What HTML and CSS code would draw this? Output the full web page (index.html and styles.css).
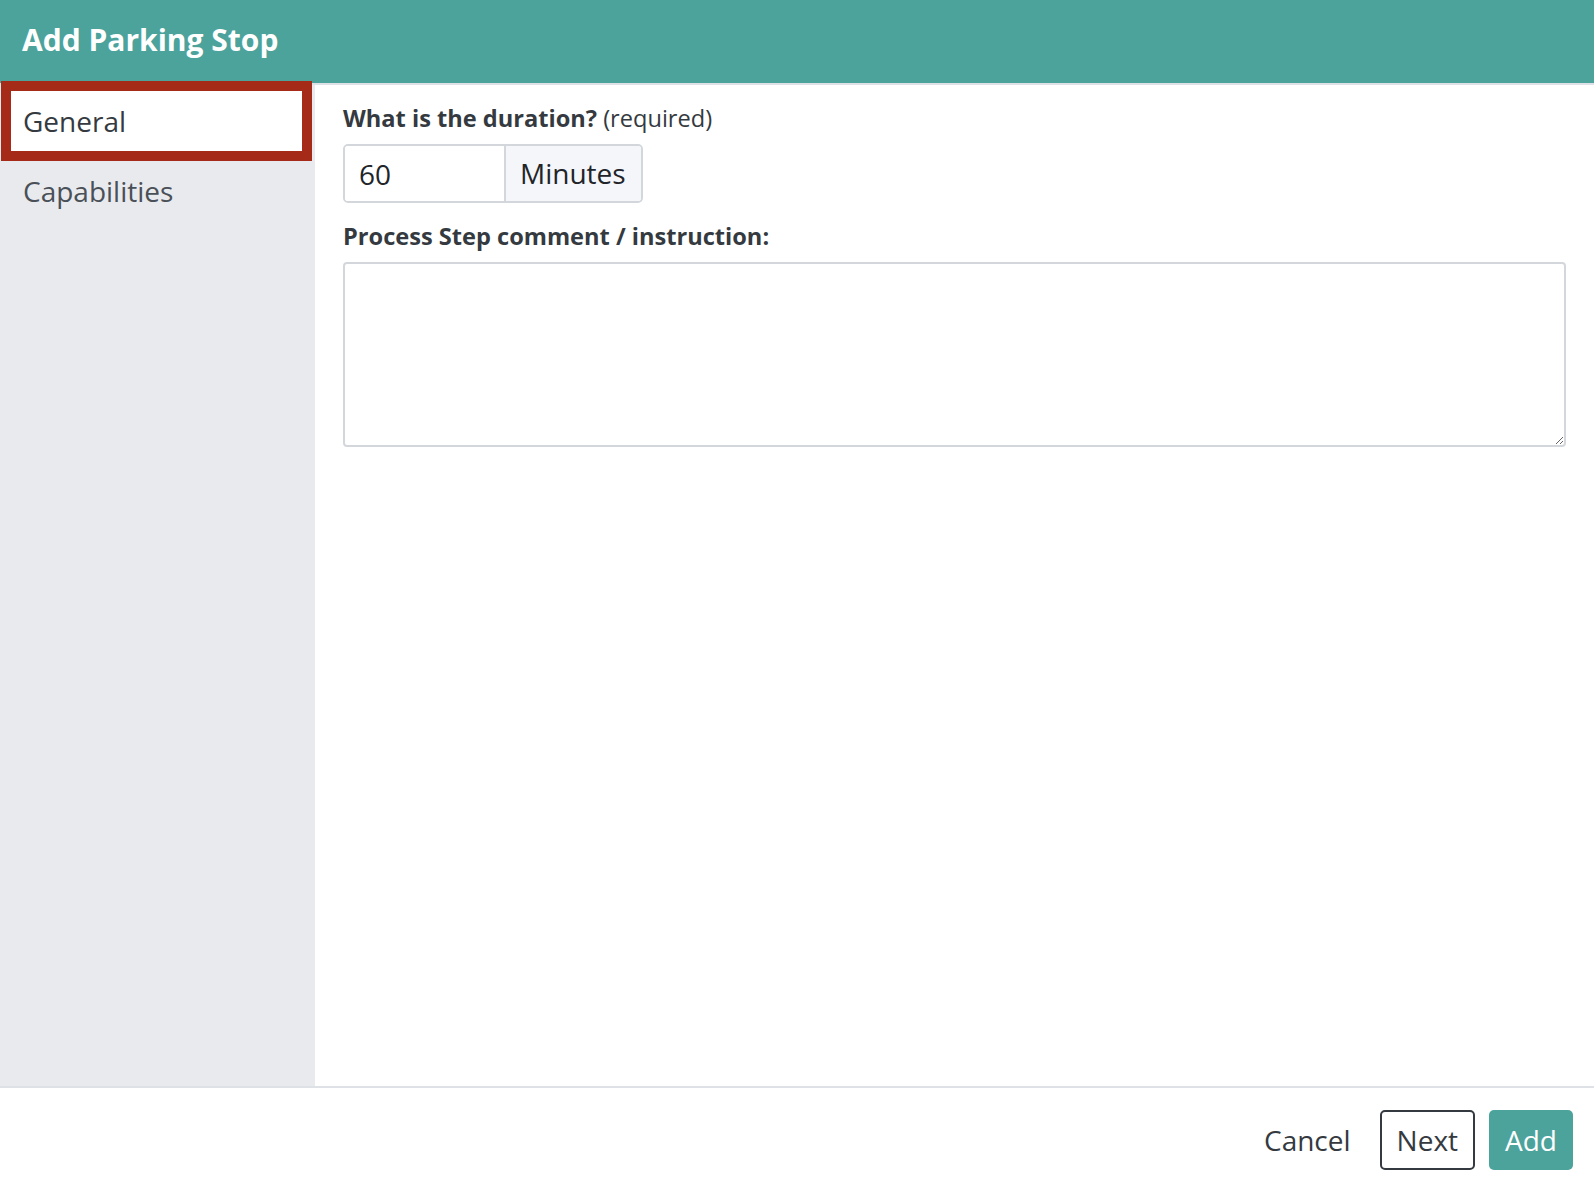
FILE: index.html
```html
<!DOCTYPE html>
<html lang="en">
<head>
  <meta charset="UTF-8" />
  <title>Add Parking Stop</title>
  <link rel="stylesheet" href="styles.css">
</head>
<body>
  <div class="dialog">
    <header class="dialog-header">
      <h1>Add Parking Stop</h1>
    </header>

    <div class="dialog-body">
      <!-- tabs -->
      <nav class="sidebar">
        <a class="tab active" href="#">General</a>
        <a class="tab" href="#">Capabilities</a>
      </nav>

      <!-- general form -->
      <form class="content">
        <label class="field-label" for="duration">What is the duration? <span class="hint">(required)</span></label>
        <div class="input-group">
          <input type="text" id="duration" name="duration" value="60">
          <span class="addon">Minutes</span>
        </div>

        <label class="field-label" for="comment">Process Step comment / instruction:</label>
        <textarea id="comment" name="comment"></textarea>
      </form>
    </div>

    <footer class="dialog-footer">
      <button type="button" class="btn btn-link">Cancel</button>
      <button type="button" class="btn btn-outline">Next</button>
      <button type="button" class="btn btn-primary">Add</button>
    </footer>
  </div>
</body>
</html>
```

FILE: styles.css
```css
* {
  box-sizing: border-box;
}

html, body {
  margin: 0;
  height: 100%;
}

body {
  font-family: 'Open Sans', 'Noto Sans', sans-serif;
  color: #343a40;
  background: white;
}

.dialog {
  display: flex;
  flex-direction: column;
  height: 100vh;
}

.dialog-header {
  height: 85px;
  background-color: #4ba39c;
  border-bottom: 2px solid #dee2e6;
  padding: 20px 22px 0;
}

.dialog-header h1 {
  margin: 0;
  font-size: 30px;
  line-height: 40px;
  font-weight: 700;
  color: white;
}

.dialog-body {
  flex: 1;
  display: flex;
  min-height: 0;
}

.sidebar {
  width: 315px;
  flex-shrink: 0;
  background-color: #e9eaee;
  padding: 6px 13px 0 11px;
  display: flex;
  flex-direction: column;
  gap: 10px;
}

.tab {
  display: block;
  height: 60px;
  line-height: 60px;
  padding-left: 12px;
  font-size: 28px;
  color: #495057;
  text-decoration: none;
}

.tab.active {
  background: white;
  color: #343a40;
  outline: 10px solid #a52a18;
  position: relative;
}

.content {
  flex: 1;
  padding: 15px 28px 0;
  display: flex;
  flex-direction: column;
}

.field-label {
  font-size: 23.6px;
  line-height: 36px;
  font-weight: 700;
  margin-bottom: 8px;
}

.field-label .hint {
  font-weight: 400;
}

.input-group {
  display: flex;
  width: 300px;
  height: 59px;
  border: 2px solid #d3d7dc;
  border-radius: 5px;
  margin-bottom: 15px;
  overflow: hidden;
}

.input-group input {
  width: 161px;
  border: none;
  border-right: 2px solid #d3d7dc;
  padding: 0 14px;
  font-family: inherit;
  font-size: 28px;
  color: #212529;
  outline: none;
}

.addon {
  flex: 1;
  background-color: #f5f6fa;
  font-size: 28px;
  line-height: 55px;
  padding-left: 14px;
  color: #212529;
}

textarea {
  width: 100%;
  height: 185px;
  border: 2px solid #d3d7dc;
  border-radius: 4px;
  font-family: inherit;
  font-size: 24px;
}

.dialog-footer {
  border-top: 2px solid #dee2e6;
  padding: 22px 21px;
  display: flex;
  justify-content: flex-end;
  gap: 14px;
}

.btn {
  height: 60px;
  font-family: inherit;
  font-size: 28px;
  border-radius: 5px;
  cursor: pointer;
}

.btn-link {
  background: none;
  border: none;
  color: #343a40;
  padding: 0 15px;
}

.btn-outline {
  background: white;
  border: 2px solid #343a40;
  color: #343a40;
  padding: 0 15px;
}

.btn-primary {
  background-color: #4ba39c;
  border: none;
  color: white;
  padding: 0 16px;
}
```
